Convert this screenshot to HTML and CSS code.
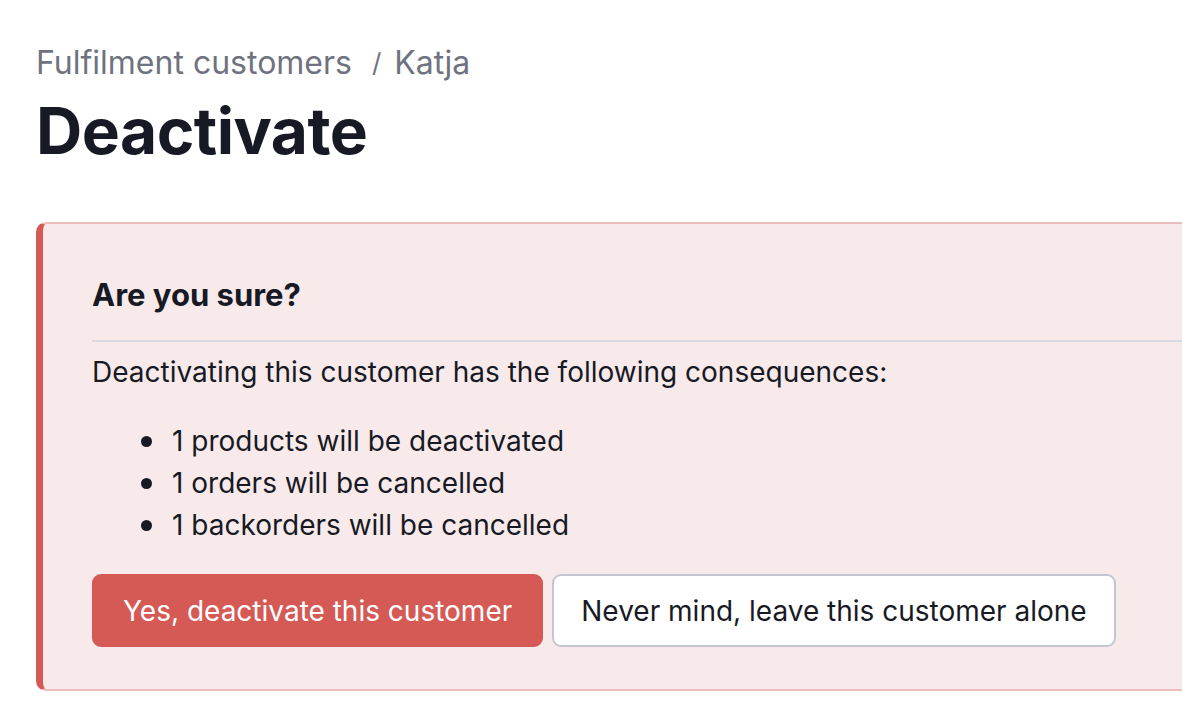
FILE: index.html
```html
<!DOCTYPE html>
<html lang="en">
<head>
<meta charset="utf-8">
<title>Deactivate</title>
<link rel="stylesheet" href="styles.css">
</head>
<body>
<main class="page">
  <nav class="breadcrumb">
    <a class="crumb" href="#">Fulfilment customers</a>
    <span class="sep">/</span>
    <span class="crumb">Katja</span>
  </nav>
  <h1 class="title">Deactivate</h1>
  <section class="alert">
    <header class="alert-head">
      <h2 class="alert-title">Are you sure?</h2>
    </header>
    <p class="alert-text">Deactivating this customer has the following consequences:</p>
    <ul class="consequences">
      <li>1 products will be deactivated</li>
      <li>1 orders will be cancelled</li>
      <li>1 backorders will be cancelled</li>
    </ul>
    <div class="actions">
      <button class="btn btn-danger" type="button">Yes, deactivate this customer</button>
      <button class="btn btn-plain" type="button">Never mind, leave this customer alone</button>
    </div>
  </section>
</main>
</body>
</html>
```

FILE: styles.css
```css
html, body {
  margin: 0;
  padding: 0;
  background: #ffffff;
  overflow: hidden;
}
body {
  font-family: Inter, "Noto Sans", sans-serif;
  color: #171a24;
}
.page {
  padding: 42px 0 0 36px;
}
.breadcrumb {
  display: flex;
  align-items: center;
  font-size: 32px;
  line-height: 42px;
  color: #6f7380;
}
.crumb {
  color: #6f7380;
  text-decoration: none;
}
.sep {
  font-size: 26px;
  margin: 0 13px 0 20px;
}
.title {
  margin: 7px 0 0 0;
  font-size: 64px;
  line-height: 80px;
  font-weight: 700;
  color: #171a24;
  letter-spacing: -0.5px;
}
.alert {
  margin: 51px -80px 0 0;
  background: #f8eaea;
  border: 2px solid #ebbdbc;
  border-left: 7px solid #d55a55;
  border-radius: 10px;
  padding: 50px 0 42px 49px;
}
.alert-head {
  border-bottom: 2px solid #dcd9e2;
  padding-bottom: 24px;
}
.alert-title {
  margin: 0;
  font-size: 31px;
  line-height: 42px;
  font-weight: 700;
  color: #171a24;
}
.alert-text {
  margin: 9px 0 0 0;
  font-size: 28px;
  line-height: 42px;
}
.consequences {
  list-style: none;
  margin: 27px 0 0 0;
  padding: 0 0 0 80px;
  font-size: 28px;
  line-height: 42px;
}
.consequences li {
  position: relative;
}
.consequences li::before {
  content: "";
  position: absolute;
  left: -31px;
  top: 16px;
  width: 11px;
  height: 11px;
  border-radius: 50%;
  background: #171a24;
}
.actions {
  display: flex;
  gap: 9px;
  margin-top: 28px;
}
.btn {
  font-family: Inter, "Noto Sans", sans-serif;
  font-size: 28px;
  line-height: 40px;
  height: 73px;
  padding: 0 29px;
  border-radius: 9px;
  cursor: pointer;
}
.btn-danger {
  background: #d55a55;
  color: #ffffff;
  border: 2px solid #d55a55;
}
.btn-plain {
  background: #ffffff;
  color: #171a24;
  border: 2px solid #c3c6d2;
  padding: 0 27px;
}
```
